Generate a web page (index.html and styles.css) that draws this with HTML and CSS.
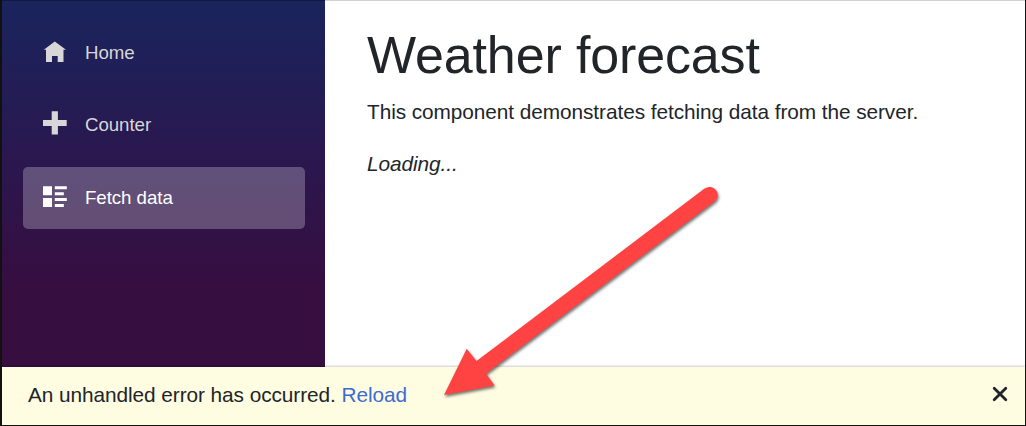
FILE: index.html
```html
<!DOCTYPE html>
<html lang="en">
<head>
<meta charset="utf-8">
<title>Weather forecast</title>
<link rel="stylesheet" href="styles.css">
</head>
<body>
<div class="window">
  <div class="page">
    <nav class="sidebar">
      <a class="nav-link"><svg class="icon" viewBox="0 0 24 24"><path d="M11.800 1.600 23 9.800H20.500v12.200h-5.800v-6H9v6H3V9.800H.8z"/></svg><span>Home</span></a>
      <a class="nav-link"><svg class="icon" viewBox="0 0 24 24"><path d="M8.700-1.700h6.200v8.700h8.800v6h-8.800v8.500H8.700V13H0V7h8.700z"/></svg><span>Counter</span></a>
      <a class="nav-link active"><svg class="icon" viewBox="0 0 24 24"><path d="M0 .2h9v9H0zM11.800 .2h12v3H11.800zM11.800 6.200h9v3h-9zM0 12h9v9H0zM11.800 12h12v3H11.800zM11.800 18h9v3h-9z"/></svg><span>Fetch data</span></a>
    </nav>
    <main class="content">
      <h1 class="title">Weather forecast</h1>
      <p class="text">This component demonstrates fetching data from the server.</p>
      <p class="text"><em>Loading...</em></p>
    </main>
  </div>
  <div class="error-bar">
    <span>An unhandled error has occurred. <a class="reload">Reload</a></span>
    <svg class="dismiss" viewBox="0 0 14 14"><path d="M1.200 1.200l11.600 11.600M12.800 1.200l-11.600 11.600"/></svg>
  </div>
</div>
<svg class="arrow" viewBox="0 0 1026 426"><path d="M444 395 466.700 348.700 476.500 361 704.500 188.600A8 8 0 0 1 714.500 201.600L486 373.500 494.500 385.500z"/></svg>
</body>
</html>
```
FILE: styles.css
```css
* { box-sizing: border-box; }
body {
  margin: 0;
  font: 20.8px/31.2px "Liberation Sans", Arial, sans-serif;
  letter-spacing: -.065px;
  color: #212529;
}
.window {
  display: flex;
  flex-direction: column;
  width: 1026px;
  height: 426px;
  overflow: hidden;
  background: #fff;
  border: solid #111;
  border-width: 0 1px 1px 2px;
}
.page {
  display: flex;
  height: 367px;
  box-shadow: inset 0 1px 0 rgba(0, 0, 0, .18);
}
.sidebar {
  display: flex;
  flex-direction: column;
  gap: 10.4px;
  width: 323px;
  padding: 21px 20.5px 0 21px;
  background: linear-gradient(#1a245d, #2b174e 45%, #360e40 78%, #360e40);
  box-shadow: inset 0 1px 0 rgba(0, 0, 0, .3);
}
.nav-link {
  display: flex;
  align-items: center;
  height: 62.4px;
  padding-left: 20px;
  border-radius: 5px;
  color: #d7d7d7;
  font-size: 18.72px;
}
.active {
  color: #fff;
  background: rgba(255, 255, 255, .25);
}
.icon {
  width: 24px;
  height: 24px;
  margin-right: 18px;
  overflow: visible;
  fill: currentColor;
}
.content { padding: 24px 0 0 42px; }
.title {
  margin: 0 0 10px;
  font-size: 52px;
  line-height: 62.4px;
  font-weight: 400;
  letter-spacing: -.14px;
}
.text { margin: 0 0 20.8px; }
.error-bar {
  display: flex;
  justify-content: space-between;
  align-items: center;
  flex: 1;
  padding: 0 18px 2px 26px;
  background: #fffde1;
  box-shadow: 0 -1px 2px rgba(0, 0, 0, .2);
}
.reload { color: #3c6bd3; }
.dismiss {
  width: 14px;
  height: 14px;
  margin-bottom: 2px;
  overflow: visible;
  fill: none;
  stroke: #20252a;
  stroke-width: 2.8;
  stroke-linecap: round;
}
.arrow {
  position: absolute;
  top: 0;
  left: 0;
  width: 1026px;
  height: 426px;
  fill: #ff4343;
  filter: drop-shadow(1px 2px 1.5px rgba(0, 0, 0, .55));
  pointer-events: none;
}
```
